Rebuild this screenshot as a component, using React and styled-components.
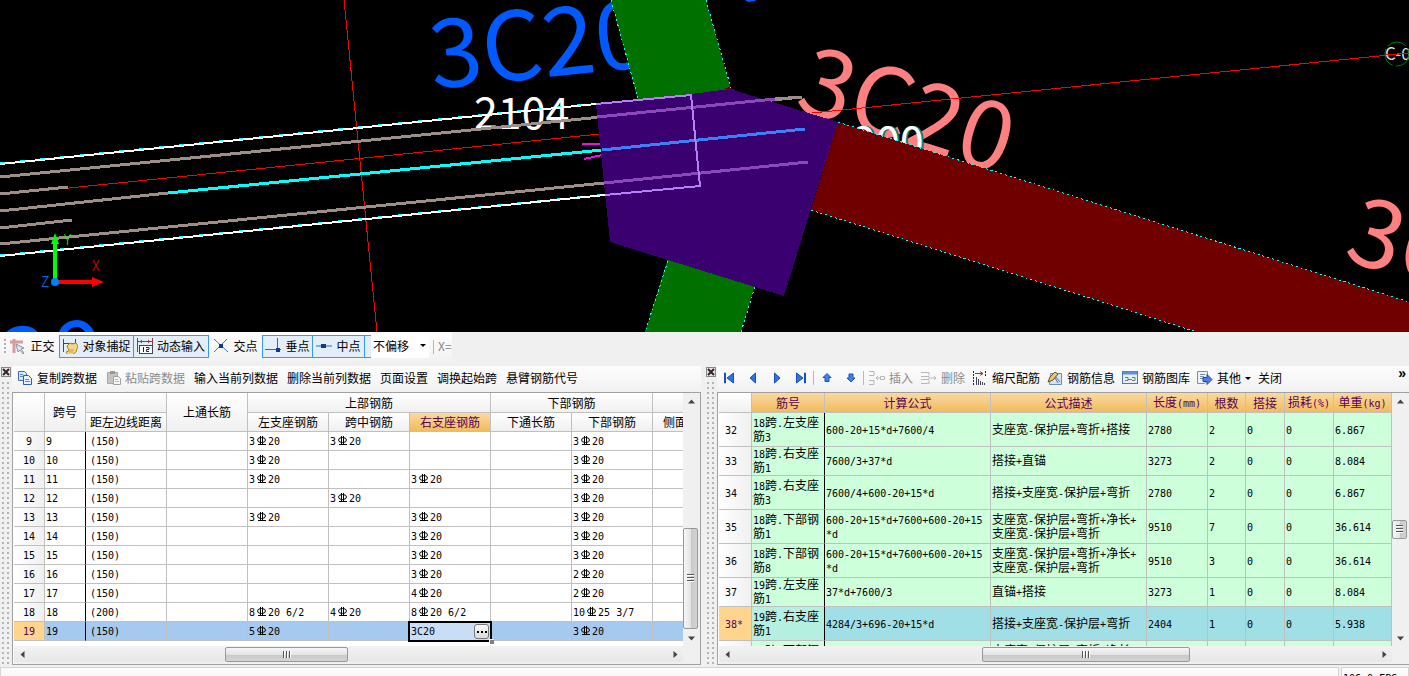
import React, { useState } from "react";
import styled, { createGlobalStyle, css } from "styled-components";

const LEFT_COLS = [31, 41, 81, 81, 81, 81, 81, 81, 81, 81];
const RIGHT_COLS = [33, 73, 166, 156, 61, 38, 39, 49, 58];

// "#" stands for the rebar grade symbol
const SPANS = [
  { no: 9, dist: "(150)", cells: ["", "3#20", "3#20", "", "", "3#20"] },
  { no: 10, dist: "(150)", cells: ["", "3#20", "", "", "", "3#20"] },
  { no: 11, dist: "(150)", cells: ["", "3#20", "", "3#20", "", "3#20"] },
  { no: 12, dist: "(150)", cells: ["", "", "3#20", "", "", "3#20"] },
  { no: 13, dist: "(150)", cells: ["", "3#20", "", "3#20", "", "3#20"] },
  { no: 14, dist: "(150)", cells: ["", "", "", "3#20", "", "3#20"] },
  { no: 15, dist: "(150)", cells: ["", "", "", "3#20", "", "3#20"] },
  { no: 16, dist: "(150)", cells: ["", "", "", "3#20", "", "2#20"] },
  { no: 17, dist: "(150)", cells: ["", "", "", "4#20", "", "2#20"] },
  { no: 18, dist: "(200)", cells: ["", "8#20 6/2", "4#20", "8#20 6/2", "", "10#25 3/7"] },
  { no: 19, dist: "(150)", cells: ["", "5#20", "", "edit", "", "3#20"], active: true },
];

const BARS = [
  { id: "32", h: 34, cells: ["18跨.左支座\n筋3", "600-20+15*d+7600/4", "支座宽-保护层+弯折+搭接", "2780", "2", "0", "0", "6.867"] },
  { id: "33", h: 29, cells: ["18跨.右支座\n筋1", "7600/3+37*d", "搭接+直锚", "3273", "2", "0", "0", "8.084"] },
  { id: "34", h: 34, cells: ["18跨.右支座\n筋3", "7600/4+600-20+15*d", "搭接+支座宽-保护层+弯折", "2780", "2", "0", "0", "6.867"] },
  { id: "35", h: 34, cells: ["18跨.下部钢\n筋1", "600-20+15*d+7600+600-20+15\n*d", "支座宽-保护层+弯折+净长+\n支座宽-保护层+弯折", "9510", "7", "0", "0", "36.614"] },
  { id: "36", h: 34, cells: ["18跨.下部钢\n筋8", "600-20+15*d+7600+600-20+15\n*d", "支座宽-保护层+弯折+净长+\n支座宽-保护层+弯折", "9510", "3", "0", "0", "36.614"] },
  { id: "37", h: 29, cells: ["19跨.左支座\n筋1", "37*d+7600/3", "直锚+搭接", "3273", "1", "0", "0", "8.084"] },
  { id: "38*", h: 34, active: true, cells: ["19跨.右支座\n筋1", "4284/3+696-20+15*d", "搭接+支座宽-保护层+弯折", "2404", "1", "0", "0", "5.938"] },
  { id: "", h: 34, cells: ["19跨.下部钢\n筋1", "", "支座宽-保护层+弯折+净长+\n支座宽-保护层+弯折", "", "", "", "", ""] },
];

const BAR_HEADS = ["筋号", "计算公式", "公式描述", "长度(mm)", "根数", "搭接", "损耗(%)", "单重(kg)"];

const RebarSign = () => (
  <Sign viewBox="0 0 12 11" aria-label="C">
    <ellipse cx="6.500" cy="5" rx="4" ry="2.500" stroke="#000" fill="none" />
    <path d="M5.500 1v9M7.500 1v9M3 9.500h8" stroke="#000" fill="none" />
  </Sign>
);

const Mixed = ({ children }) =>
  String(children)
    .split(/(#|[\x20-\x22\x24-\x7e]+)/)
    .filter(Boolean)
    .map((part, i) => {
      if (part === "#") return <RebarSign key={i} />;
      return /^[\x20-\x7e]+$/.test(part) ? <Mono key={i}>{part}</Mono> : part;
    });

const Scene = () => (
  <Canvas viewBox="0 0 1409 332" preserveAspectRatio="xMinYMin slice">
    <rect width="1409" height="332" fill="#000" />
    <g fontFamily="'Noto Sans CJK SC', sans-serif" fontSize="95">
      <text fill="#005aff" transform="translate(433 89) rotate(-6)">3C20</text>
      <text fill="#005aff" transform="translate(3 397) rotate(-6)">20</text>
      <text fill="#ff8080" transform="translate(793 109) rotate(17.5)">3C20</text>
      <text fill="#ff8080" transform="translate(1342 259) rotate(17.5)">3C</text>
    </g>
    <path d="M745 0h11l-1 1-7 1z" fill="#005aff" />
    <g fontFamily="'Noto Sans CJK SC', sans-serif" fontSize="43">
      <text x="474" y="129" fill="#fff">2104</text>
      <text x="854" y="158" fill="#008080">200</text>
      <text x="852" y="158" fill="#fff">200</text>
    </g>

    <g shapeRendering="crispEdges">
      <path d="M611 0h95l25 90-93 10zM668 258l87 26-14 48h-96z" fill="#007000" />
      <path d="M838 122l571 180v30h-212L811 210z" fill="#700000" />
      <path d="M706 0l25 88M611 0l27 98M668 261l-23 71M755 287l-14 45M838 122l571 180M811 210l386 122" fill="none" stroke="#00ffff" strokeDasharray="2 3" />

      <path d="M344 0l33 332M0 195l600-61M812 113l597-60" stroke="#f00" fill="none" />
      <path d="M0 163l596-60M0 255l605-61" stroke="#0ff" strokeDasharray="8 12" fill="none" />
      <path d="M0 164l596-60M0 256l605-61" stroke="#fff" strokeWidth="2" fill="none" />
      <g stroke="#9d8f88" strokeWidth="3" fill="none">
        <path d="M0 177l802-80M0 194l68-7M0 211l168-18M0 228l72-8M0 244l604-61" />
      </g>
      <path d="M168 193l434-43" stroke="#0ff" strokeWidth="3" />
      <path d="M582 144h18M584 159l18-4" stroke="#f0f" strokeWidth="2" />

      <path d="M724 89l5-2 7 3z" fill="#700000" />
      <path d="M596 104l95-10 39-5 108 33-54 174-174-54z" fill="#3a0070" />
      <path d="M597 117l178-18M604 183l204-21" stroke="#8a48b8" strokeWidth="3" />
      <path d="M775 99l27-2" stroke="#9d8f88" strokeWidth="3" />
      <path d="M602 150l203-21" stroke="#3a80f8" strokeWidth="3" />
      <path d="M596 104l95-9 9 91-95 9" stroke="#b880f8" strokeWidth="2" fill="none" />
    </g>

    <text x="1385" y="60" fontSize="17" fill="#ddd" fontFamily="'Noto Sans CJK SC', sans-serif">C-0</text>
    <circle cx="1397" cy="54" r="12" fill="none" stroke="#008000" strokeDasharray="20 3" />
    <path d="M1385 55l24-2" stroke="#f00" shapeRendering="crispEdges" />

    <path d="M53 282v-38h-2l4-11 4 11h-2v38z" fill="#0f0" />
    <path d="M58 280h34v-3l12 5-12 5v-3H58z" fill="#f00" />
    <circle cx="55" cy="282" r="4" fill="#0080ff" />
    <g fontFamily="'Noto Sans CJK SC', sans-serif" fontSize="14" fontWeight="300">
      <text x="64" y="245" fill="#0f0">Y</text>
      <text x="92" y="271" fill="#f00">X</text>
      <text x="41" y="287" fill="#0080ff">Z</text>
    </g>
  </Canvas>
);

const ICONS = {
  ortho: (
    <>
      <path d="M0 4h13M4 1v14" stroke="#dc9a9c" strokeWidth="3" />
      <path d="M6 6l8 4-3 1 3 4-1 1-3-4-2 2z" fill="#dfe6ee" stroke="#8896a4" />
    </>
  ),
  snap: (
    <>
      <path d="M1.500 1v13M13.500 1v7M1 5.500h14" stroke="#7c3038" fill="none" />
      <path d="M5 8l3-3 2 1 4-1 2 3-2 6-4 3H6l-2-3 3-1z" fill="#f4d684" stroke="#a88428" />
      <path d="M6 12h6M7 14h4" stroke="#c8a040" />
    </>
  ),
  dyn: (
    <>
      <path d="M.5 0v14M15.500 0v14M1 3.500h14" stroke="#8a3c40" />
      <path d="M3 3.500l2-2v4zM13 3.500l-2-2v4z" fill="#8a3c40" />
      <rect x="2.500" y="7.500" width="13" height="8" fill="#fff" stroke="#445" />
      <path d="M6.500 9v5M9 9.500h3v2H9.500v2H12" stroke="#222" fill="none" />
    </>
  ),
  cross: (
    <>
      <path d="M1 1l14 13M14 1L1 14" stroke="#3c78c8" />
      <rect x="6" y="6" width="4" height="4" fill="#0c3c90" />
    </>
  ),
  perp: (
    <>
      <path d="M0 11.500h16M12.500 0v11" stroke="#2c68b8" />
      <rect x="11" y="10" width="4" height="4" fill="#0c3c90" />
    </>
  ),
  mid: (
    <>
      <path d="M0 8h16" stroke="#2c68b8" />
      <rect x="5" y="6" width="5" height="4" fill="#0c3c90" />
    </>
  ),
  copy: (
    <>
      <path d="M1.500 1.500h6l2 2v7h-8z" fill="#d8e8fc" stroke="#3c6cb8" />
      <path d="M6.500 5.500h5l3 3v6h-8z" fill="#e8f2ff" stroke="#2c5cb0" />
      <path d="M8 9.500h4M8 11.500h5M3 4.500h3M3 6.500h3" stroke="#5c8cd0" />
    </>
  ),
  paste: (
    <>
      <path d="M1.500 2.500h10v11h-10z" fill="#c4c4c4" stroke="#a8a8a8" />
      <path d="M4 1h5v3H4z" fill="#999" />
      <path d="M7.500 6.500h5l2 2v6h-7z" fill="#f4f4f4" stroke="#a0a0a0" />
      <path d="M9 9.500h3M9 11.500h4" stroke="#bbb" />
    </>
  ),
  first: <path d="M3.500 3h1v10h-1zM12.500 3v10L6 8z" fill="#2c74ec" stroke="#1450c0" />,
  prev: <path d="M10.500 3v10L5 8z" fill="#2c74ec" stroke="#1450c0" />,
  next: <path d="M5.500 3v10L11 8z" fill="#2c74ec" stroke="#1450c0" />,
  last: <path d="M11.500 3h1v10h-1zM3.500 3v10L10 8z" fill="#2c74ec" stroke="#1450c0" />,
  up: <path d="M8 3.500l4 4H10v4H6v-4H4z" fill="#3c84f4" stroke="#1450c0" />,
  down: <path d="M8 12l4-4H10V4H6v4H4z" fill="#3c84f4" stroke="#1450c0" />,
  insert: (
    <path d="M1 1.500h5v4H1M1 10.500h5v4H1M8 8h4M10 6L8 8l2 2M12.500 6.500h4v3h-4z" fill="none" stroke="#b8b8b8" />
  ),
  remove: <path d="M1 2.500h8v3M1 13.500h8v-3M1 6.500h8v3H1M10 8h6M14 6l2 2-2 2" fill="none" stroke="#b8b8b8" />,
  scale: (
    <>
      <path d="M3 3.500h8M8 1.500l3 2-3 2" stroke="#b03020" fill="none" />
      <path d="M1.500 1v14M13.500 1v5" stroke="#223" strokeDasharray="2 1" />
      <path d="M4.500 7v8M6.500 9v6M8.500 11v4M10.500 12v3M12.500 13v2" stroke="#445" />
    </>
  ),
  info: (
    <>
      <path d="M3.500 3.500h11v11h-12z" fill="#d4e4f8" stroke="#6c8cb8" />
      <path d="M8 6l5 6M8 8l3 5" stroke="#5070a0" />
      <path d="M1 12l2-5 5-5 3 2-5 6z" fill="#f0c860" stroke="#5c5040" />
    </>
  ),
  library: (
    <>
      <rect x=".5" y="1.500" width="15" height="12" fill="#e8eef8" stroke="#5078b0" />
      <path d="M1 3h14" stroke="#5c90dc" strokeWidth="3" />
      <path d="M3 7.500h3v3H3M6 9.500h4M10 7.500h3v3h-3" stroke="#707880" fill="none" />
    </>
  ),
  other: (
    <>
      <path d="M.5 1.500h10v8l-3 4h-7z" fill="#eef3fa" stroke="#7890b0" />
      <path d="M3 4.500h5M3 6.500h4M3 8.500h3" stroke="#7890b0" />
      <path d="M6 7.500h4V4.500l5 5-5 5v-3H6z" fill="#4c80e8" stroke="#1c48a0" />
    </>
  ),
  close: (
    <>
      <rect x="1.500" y="1.500" width="9" height="9" fill="#e8e8e8" stroke="#888" />
      <path d="M3 3l6 6M9 3L3 9" stroke="#3a2028" strokeWidth="2" />
    </>
  ),
};

const Icon = ({ name, w = 16 }) => (
  <IconSvg $w={w} viewBox={`0 0 ${w} 16`} aria-hidden="true">
    {ICONS[name]}
  </IconSvg>
);

const Arrow = ({ dir }) => {
  const turn = { up: 0, right: 90, down: 180, left: 270 }[dir];
  return (
    <svg width="7" height="7" viewBox="0 0 7 7" aria-hidden="true">
      <path d="M0 5.500L3.500 1.500 7 5.500z" fill="#444" transform={`rotate(${turn} 3.500 3.500)`} />
    </svg>
  );
};

const VScroll = ({ before, thumb, after }) => (
  <VTrack>
    <ArrowButton aria-label="up"><Arrow dir="up" /></ArrowButton>
    <Space $n={before} />
    <VThumb $size={thumb}><Ridges $vertical /></VThumb>
    <Space $n={after} />
    <ArrowButton aria-label="down"><Arrow dir="down" /></ArrowButton>
  </VTrack>
);

const HScroll = ({ before, thumb, after }) => (
  <HTrack>
    <ArrowButton aria-label="left"><Arrow dir="left" /></ArrowButton>
    <Space $n={before} />
    <HThumb $size={thumb}><Ridges /></HThumb>
    <Space $n={after} />
    <ArrowButton aria-label="right"><Arrow dir="right" /></ArrowButton>
  </HTrack>
);

const SpanTable = () => {
  const [value, setValue] = useState("3C20");
  return (
    <Table $cols={LEFT_COLS}>
      <colgroup>
        {LEFT_COLS.map((w, i) => (
          <Col key={i} $w={w} />
        ))}
      </colgroup>
      <thead>
        <HeadRow $h={20}>
          <Th rowSpan={2} />
          <Th rowSpan={2}>跨号</Th>
          <Th />
          <Th rowSpan={2}>上通长筋</Th>
          <Th colSpan={3}>上部钢筋</Th>
          <Th colSpan={2}>下部钢筋</Th>
          <Th />
        </HeadRow>
        <HeadRow $h={19}>
          <Th>距左边线距离</Th>
          <Th>左支座钢筋</Th>
          <Th>跨中钢筋</Th>
          <Th $hot>右支座钢筋</Th>
          <Th>下通长筋</Th>
          <Th>下部钢筋</Th>
          <Th $start>侧面</Th>
        </HeadRow>
      </thead>
      <tbody>
        {SPANS.map((row) => (
          <Row key={row.no} $h={19} $bg={row.active ? "#a6c9ef" : "#fff"}>
            <RowHead scope="row" $active={row.active}>
              <Mono>{row.no}</Mono>
            </RowHead>
            <Td $frozen><Mono>{row.no}</Mono></Td>
            <Td $pad={4}><Mono>{row.dist}</Mono></Td>
            {row.cells.map((cell, i) =>
              cell === "edit" ? (
                <Td key={i} $edit>
                  <Editor>
                    <EditInput
                      aria-label="右支座钢筋"
                      value={value}
                      onChange={(e) => setValue(e.target.value)}
                    />
                    <MoreButton aria-label="more"><i /><i /><i /></MoreButton>
                    <Handle />
                  </Editor>
                </Td>
              ) : (
                <Td key={i}><Mixed>{cell}</Mixed></Td>
              )
            )}
            <Td />
          </Row>
        ))}
      </tbody>
    </Table>
  );
};

const BarTable = () => (
  <Table $cols={RIGHT_COLS}>
    <colgroup>
      {RIGHT_COLS.map((w, i) => (
        <Col key={i} $w={w} />
      ))}
    </colgroup>
    <thead>
      <HeadRow $h={20}>
        <Th />
        {BAR_HEADS.map((h) => (
          <Th key={h} $hot><Mixed>{h}</Mixed></Th>
        ))}
      </HeadRow>
    </thead>
    <tbody>
      {BARS.map((row, r) => (
        <Row key={r} $h={row.h} $bg={row.active ? "#a0dfe5" : "#ccffda"}>
          <RowHead scope="row" $active={row.active} $left>
            <Mono>{row.id}</Mono>
          </RowHead>
          {row.cells.map((cell, i) => (
            <Td key={i} $frozen={i === 0} $soft={row.active && i === 0}>
              <Mixed>{cell}</Mixed>
            </Td>
          ))}
        </Row>
      ))}
    </tbody>
  </Table>
);

export default function App() {
  const [offset, setOffset] = useState("none");
  return (
    <>
      <Global />
      <Page>
        <Scene />
        <SnapRow>
          <SnapBar>
            <Dots />
            <Tool $w={53}><Icon name="ortho" />正交</Tool>
            <Tool $on $w={75}><Icon name="snap" />对象捕捉</Tool>
            <Tool $on $joined $w={75}><Icon name="dyn" />动态输入</Tool>
            <Tool $w={53}><Icon name="cross" />交点</Tool>
            <Tool $on $w={51}><Icon name="perp" />垂点</Tool>
            <Tool $on $joined $w={52}><Icon name="mid" />中点</Tool>
            <CutTool aria-label="顶点" />
            <OffsetBox>
              <Select aria-label="偏移" value={offset} onChange={(e) => setOffset(e.target.value)}>
                <option value="none">不偏移</option>
              </Select>
              <Caret />
            </OffsetBox>
            <Divider />
            <Coord>X=</Coord>
          </SnapBar>
        </SnapRow>

        <Panels>
          <Panel $grow={701}>
            <Grip><Icon name="close" w={12} /><GripDots /></Grip>
            <Body>
              <ToolBar>
                <Item><Icon name="copy" />复制跨数据</Item>
                <Item disabled><Icon name="paste" w={15} />粘贴跨数据</Item>
                <Item>输入当前列数据</Item>
                <Item>删除当前列数据</Item>
                <Item>页面设置</Item>
                <Item>调换起始跨</Item>
                <Item>悬臂钢筋代号</Item>
              </ToolBar>
              <Frame>
                <View>
                  <Clip><SpanTable /></Clip>
                  <VScroll before={118} thumb={101} after={1} />
                </View>
                <ScrollRow>
                  <HScroll before={195} thumb={123} after={319} />
                </ScrollRow>
              </Frame>
            </Body>
          </Panel>
          <Panel $grow={704}>
            <Grip><Icon name="close" w={12} /><GripDots /></Grip>
            <Body>
              <ToolBar $tight>
                <Nav aria-label="first"><Icon name="first" /></Nav>
                <Nav aria-label="previous"><Icon name="prev" /></Nav>
                <Nav aria-label="next"><Icon name="next" /></Nav>
                <Nav aria-label="last"><Icon name="last" /></Nav>
                <Divider />
                <Nav aria-label="up"><Icon name="up" /></Nav>
                <Nav aria-label="down"><Icon name="down" /></Nav>
                <Divider />
                <Item disabled><Icon name="insert" w={17} />插入</Item>
                <Item disabled><Icon name="remove" w={17} />删除</Item>
                <Item><Icon name="scale" />缩尺配筋</Item>
                <Item><Icon name="info" />钢筋信息</Item>
                <Item><Icon name="library" />钢筋图库</Item>
                <Item><Icon name="other" />其他<Caret /></Item>
                <Item>关闭</Item>
                <Overflow aria-label="more tools">»</Overflow>
              </ToolBar>
              <Frame $open>
                <View>
                  <Clip><BarTable /></Clip>
                  <VScroll before={110} thumb={19} after={91} />
                </View>
                <ScrollRow>
                  <HScroll before={246} thumb={208} after={186} />
                </ScrollRow>
              </Frame>
            </Body>
          </Panel>
        </Panels>

        <StatusBar>
          <StatusPane $fill />
          <StatusPane><Mono>106.0 FPS</Mono></StatusPane>
        </StatusBar>
      </Page>
    </>
  );
}

const Global = createGlobalStyle`
  * {
    box-sizing: border-box;
  }

  body {
    margin: 0;
    background: #f0f0f0;
    color: #000;
    font: 12px/18px "Noto Sans CJK SC", sans-serif;
  }

  button, input, select {
    font: inherit;
    color: inherit;
    border: 0;
    margin: 0;
    padding: 0;
    background: none;
    border-radius: 0;
  }
`;

const Page = styled.main`
  display: flex;
  flex-direction: column;
  height: 100vh;
  overflow: hidden;
`;

const Canvas = styled.svg`
  display: block;
  width: 100%;
  flex: 1 1 0;
  min-height: 0;
  background: #000;
`;

const Mono = styled.span`
  font-family: "DejaVu Sans Mono", monospace;
  font-size: 10px;
  line-height: 12px;
`;

const Sign = styled.svg`
  width: 12px;
  height: 11px;
  margin-right: 1px;
  vertical-align: -1px;
`;

const IconSvg = styled.svg`
  width: ${(p) => p.$w}px;
  height: 16px;
  flex: none;
`;

const SnapRow = styled.div`
  display: flex;
  height: 34px;
  padding-bottom: 5px;
`;

const SnapBar = styled.div`
  display: flex;
  align-items: center;
  padding-left: 4px;
  background: linear-gradient(#fdfdfd, #f2f2f2);
`;

const Dots = styled.span`
  width: 2px;
  height: 16px;
  background: repeating-linear-gradient(#b0b0b0 0 2px, transparent 2px 4px);
`;

const Tool = styled.button`
  display: flex;
  align-items: center;
  justify-content: center;
  gap: 4px;
  flex: none;
  width: ${(p) => p.$w}px;
  height: 23px;
  padding-bottom: 2px;
  white-space: nowrap;
  border: 1px solid transparent;
  ${(p) =>
    p.$on &&
    css`
      background: #e4eef9;
      border-color: #3399ff;
    `}
  ${(p) => p.$joined && "border-left: 0;"}
`;

const CutTool = styled.button`
  width: 6px;
  height: 23px;
  background: #e4eef9;
  border-top: 1px solid #3399ff;
  border-bottom: 1px solid #3399ff;
`;

const OffsetBox = styled.label`
  display: flex;
  align-items: center;
  width: 58px;
  height: 23px;
  padding: 0 3px 2px 2px;
  background: #fff;
`;

const Select = styled.select`
  flex: 1;
  min-width: 0;
  appearance: none;
  outline: none;
`;

const Caret = styled.span`
  flex: none;
  border: 3px solid transparent;
  border-top-color: #000;
  border-bottom: 0;
`;

const Divider = styled.span`
  flex: none;
  width: 1px;
  height: 14px;
  margin: 0 4px;
  background: #b8b8b8;
`;

const Coord = styled.span`
  padding-bottom: 2px;
  color: #888;
`;

const Panels = styled.div`
  display: flex;
  flex: none;
  gap: 4px;
  height: 301px;
  padding-bottom: 2px;
`;

const Panel = styled.section`
  display: flex;
  flex: ${(p) => p.$grow} 1 0;
  min-width: 0;
`;

const Grip = styled.div`
  display: flex;
  flex-direction: column;
  flex: none;
  width: 12px;
`;

const GripDots = styled.div`
  flex: 1;
  margin: 0 1px 0 2px;
  background: radial-gradient(circle at 1px 1px, #b4b4b4 1px, transparent 1px) 0 0 / 5px 5px;
`;

const Body = styled.div`
  display: flex;
  flex-direction: column;
  flex: 1;
  min-width: 0;
`;

const ToolBar = styled.div`
  display: flex;
  align-items: center;
  flex: none;
  height: 26px;
  padding: 0 0 2px ${(p) => (p.$tight ? 3 : 5)}px;
  gap: ${(p) => (p.$tight ? 0 : 9)}px;
  background: linear-gradient(#fdfdfd, #f1f1f1);

  ${(p) => p.$tight && "& > button + button { margin-left: 7px; }"}
`;

const Item = styled.button`
  display: flex;
  align-items: center;
  gap: 4px;
  flex: none;
  white-space: nowrap;

  &:disabled {
    color: #8c8c8c;
  }
`;

const Nav = styled.button`
  display: flex;
  width: 17px;
  justify-content: center;
  flex: none;
`;

const Overflow = styled.button`
  margin-left: auto !important;
  align-self: flex-start;
  padding: 0 3px;
  font: bold 14px/14px "Liberation Sans", sans-serif;
`;

const Frame = styled.div`
  display: flex;
  flex-direction: column;
  flex: 1;
  padding-left: 1px;
  border: 1px solid #a0a0a0;
  ${(p) => p.$open && "border-right: 0;"}
  background: #fff;
`;

const View = styled.div`
  display: flex;
  flex: 1;
  min-height: 0;
`;

const Clip = styled.div`
  flex: 1;
  min-width: 0;
  height: 253px;
  overflow: hidden;
`;

const Table = styled.table`
  table-layout: fixed;
  width: ${(p) => p.$cols.reduce((a, b) => a + b, 0)}px;
  border-collapse: separate;
  border-spacing: 0;
`;

const Col = styled.col`
  width: ${(p) => p.$w}px;
`;

const HeadRow = styled.tr`
  height: ${(p) => p.$h}px;
`;

const Th = styled.th`
  padding: 0;
  font-weight: normal;
  line-height: 12px;
  white-space: nowrap;
  text-align: center;
  background: linear-gradient(#fff, #f0f0f0);
  border: solid #c0c0c0;
  border-width: 0 1px 1px 0;
  ${(p) => p.$start && "text-align: left; padding-left: 10px;"}
  ${(p) =>
    p.$hot &&
    css`
      color: #5a0058;
      background: linear-gradient(#fad9a0, #f0bc5c);
    `}
`;

const Row = styled.tr`
  height: ${(p) => p.$h}px;
  background: ${(p) => p.$bg};
`;

const RowHead = styled.th`
  padding: ${(p) => (p.$left ? "0 0 0 6px" : 0)};
  text-align: ${(p) => (p.$left ? "left" : "center")};
  font-weight: normal;
  line-height: 12px;
  border: solid #c0c0c0;
  border-width: 0 1px 1px 0;
  background: ${(p) => (p.$active ? "#ffd48c" : "linear-gradient(90deg, #fff, #f0f0f0)")};
  color: ${(p) => (p.$active ? "#5a0058" : "#000")};
`;

const Td = styled.td`
  padding: 0 0 0 ${(p) => p.$pad || 1}px;
  line-height: 12px;
  white-space: pre;
  border: solid #c0c0c0;
  border-width: 0 1px 1px 0;
  ${(p) => p.$frozen && "border-right-color: #000;"}
  ${(p) => p.$soft && "background: #b4efdf;"}
  ${(p) => p.$edit && "position: relative;"}
`;

const Editor = styled.div`
  position: absolute;
  inset: -1px -2px -2px -2px;
  display: flex;
  align-items: center;
  padding: 0 1px;
  border: 2px solid #000;
  background: #c9def6;
`;

const EditInput = styled.input`
  flex: 1;
  min-width: 0;
  font: 10px/12px "DejaVu Sans Mono", monospace;
  outline: none;
`;

const MoreButton = styled.button`
  display: flex;
  align-items: center;
  justify-content: center;
  gap: 2px;
  width: 15px;
  height: 15px;
  border: 1px solid #777;
  border-radius: 3px;
  background: linear-gradient(#f8f8f8, #dcdcdc);

  i {
    width: 2px;
    height: 2px;
    background: #000;
  }
`;

const Handle = styled.span`
  position: absolute;
  right: -4px;
  bottom: -4px;
  width: 5px;
  height: 5px;
  background: #808080;
  border: solid #fff;
  border-width: 1px 0 0 1px;
`;

const VTrack = styled.div`
  display: flex;
  flex-direction: column;
  flex: none;
  width: 17px;
  background: #f0f0f0;
`;

const ScrollRow = styled.div`
  display: flex;
  flex: none;
  height: 18px;
  padding: 0 17px 2px 0;
  background: #f0f0f0;
`;

const HTrack = styled.div`
  display: flex;
  align-items: center;
  flex: 1;
  min-width: 0;
  background: linear-gradient(#f2f2f2, #e8e8e8);
`;

const ArrowButton = styled.button`
  display: flex;
  align-items: center;
  justify-content: center;
  flex: none;
  width: 16px;
  height: 16px;
`;

const Space = styled.span`
  flex: ${(p) => p.$n} 1 0;
`;

const VThumb = styled.div`
  display: flex;
  align-items: center;
  justify-content: center;
  flex: none;
  width: 15px;
  height: ${(p) => p.$size}px;
  border: 1px solid #989898;
  border-radius: 2px;
  background: linear-gradient(90deg, #f6f6f6, #e4e4e4 50%, #c8c8c8 51%, #d4d4d4);
`;

const HThumb = styled.div`
  display: flex;
  align-items: center;
  justify-content: center;
  flex: none;
  width: ${(p) => p.$size}px;
  height: 15px;
  border: 1px solid #989898;
  border-radius: 2px;
  background: linear-gradient(#f6f6f6, #e4e4e4 50%, #c8c8c8 51%, #d4d4d4);
`;

const Ridges = styled.span`
  width: ${(p) => (p.$vertical ? 7 : 8)}px;
  height: ${(p) => (p.$vertical ? 8 : 7)}px;
  background: repeating-linear-gradient(
    ${(p) => (p.$vertical ? "180deg" : "90deg")},
    #555 0 1px,
    #fff 1px 2px,
    transparent 2px 3px
  );
`;

const StatusBar = styled.footer`
  display: flex;
  flex: none;
  gap: 2px;
  height: 9px;
  overflow: hidden;
`;

const StatusPane = styled.div`
  flex: ${(p) => (p.$fill ? "1" : "0 0 68px")};
  height: 22px;
  padding: 2px 1px;
  border: 1px solid #d4d4d4;
  line-height: 14px;
  background: linear-gradient(#fcfcfc, #f0f0f0);
`;
